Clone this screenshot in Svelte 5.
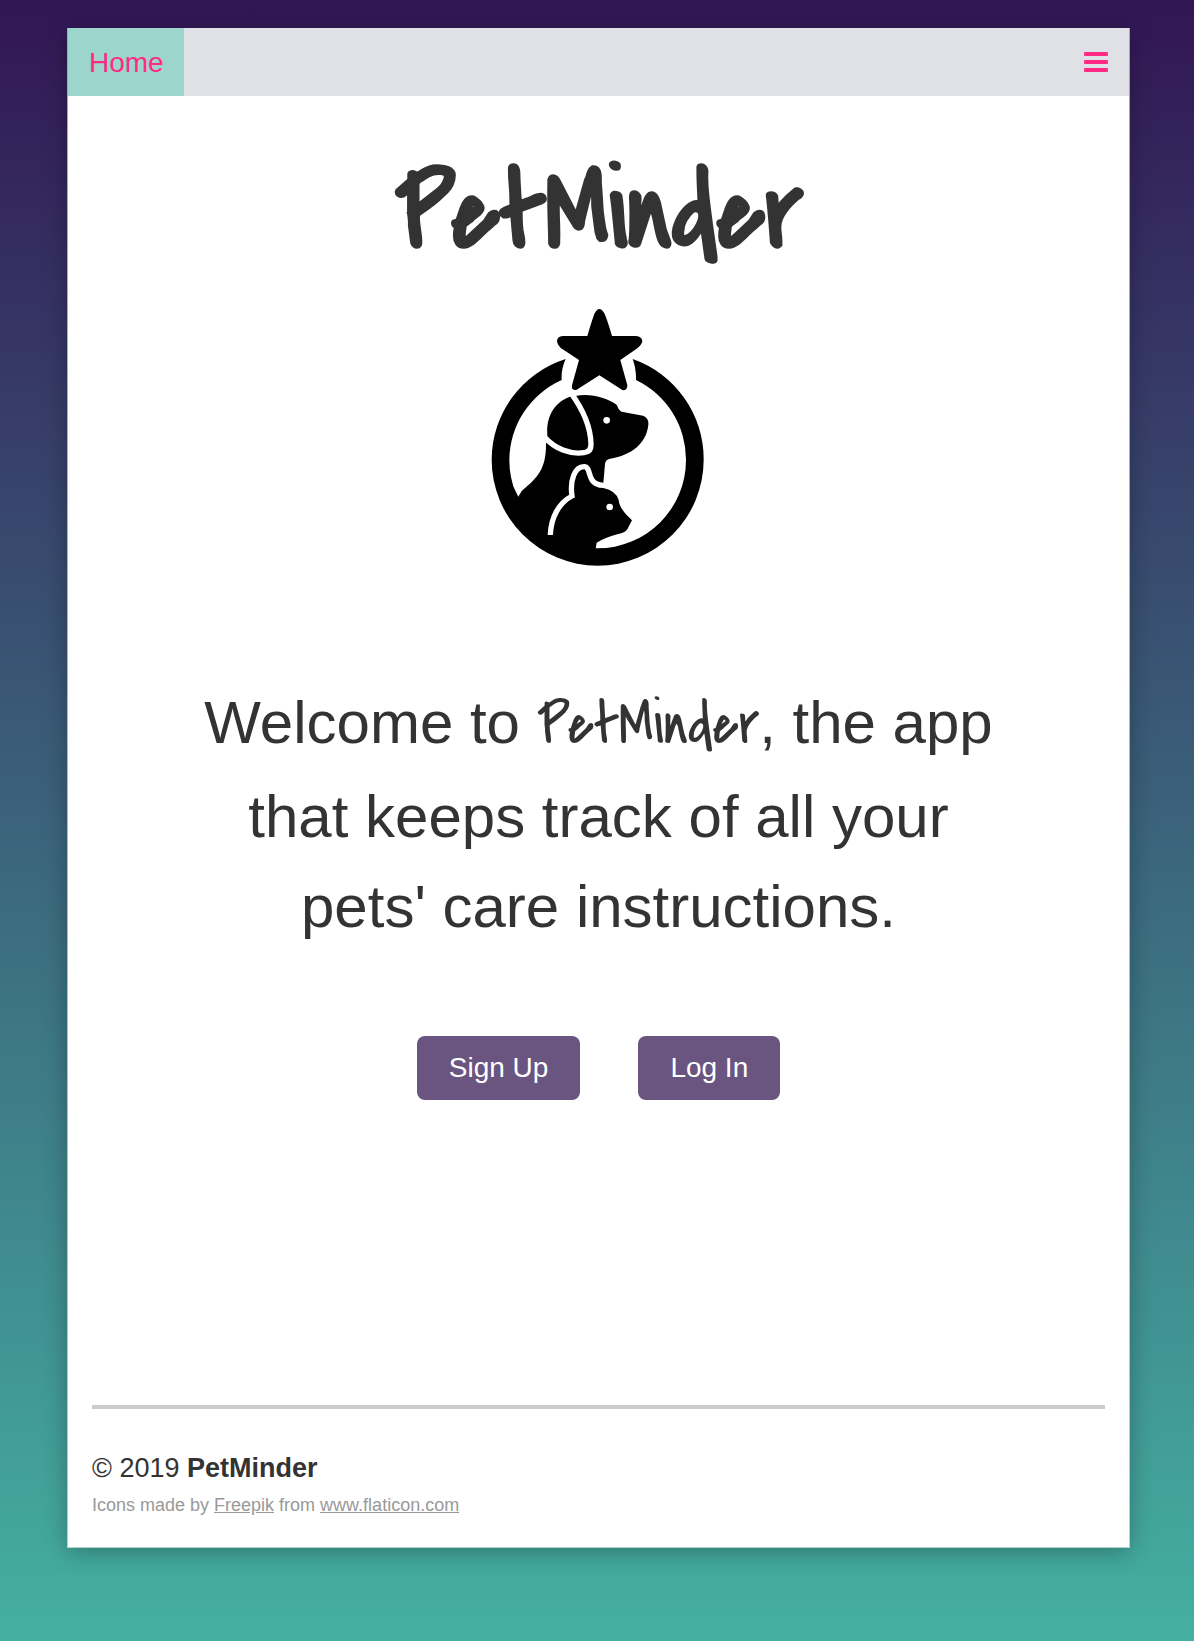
<script>
  const actions = [
    { label: 'Sign Up', href: '#signup' },
    { label: 'Log In', href: '#login' }
  ];
</script>

<div class="page">
  <div class="card">
    <nav class="navbar">
      <a class="home" href="#home">Home</a>
      <button class="menu" type="button" aria-label="Open menu">
        <svg viewBox="0 0 26 20" width="26" height="20" aria-hidden="true">
          <rect x="1" y="0" width="24" height="4" rx="1" />
          <rect x="1" y="8" width="24" height="4" rx="1" />
          <rect x="1" y="16" width="24" height="4" rx="1" />
        </svg>
      </button>
    </nav>

    <main>
      <h1>PetMinder</h1>

      <svg class="logo" viewBox="36 24 642 780" role="img" aria-label="Dog and cat under a star">
        <path d="M458 177A318 318 0 0 1 671 479A318 318 0 0 1 353 797A318 318 0 0 1 35 479A318 318 0 0 1 257 177Q243 207 245 240A265 265 0 0 0 88 480A265 265 0 0 0 353 745A265 265 0 0 0 618 480A265 265 0 0 0 468 240Q469 207 458 177Z" />
        <path d="M287 288C330 279 385 294 411 316Q416 332 425 335L489 347Q507 353 505 375C499 430 455 466 390 476Q376 479 375 492L370 549V564Q408 572 416 600C418 625 440 645 456 661L442 688Q434 699 415 702Q376 712 350 728L347 746L340 780C220 780 120 690 100 560L115 590L125 573C175 532 199 505 198 430L202 408C198 345 225 308 268 291Z" />
        <path class="line" d="M272 278C310 330 332 385 333 432Q334 456 312 458C270 464 225 446 194 412" />
        <path class="line" d="M211 705C213 650 238 608 276 588C269 542 284 498 314 500C328 502 326 524 336 540Q347 557 374 556" />
        <circle class="eye" cx="380" cy="361" r="10" />
        <circle class="eye" cx="389" cy="621" r="10" />
        <path d="M344 40Q358 14 373 40Q380 54 396 108H468Q487 110 487 124Q484 137 470 146L421 180L442 256Q442 273 427 270L358 226L290 269Q273 273 276 256L297 180L248 148Q232 137 231 122Q233 109 248 108H322Q338 54 344 40Z" />
      </svg>

      <p class="welcome">
        Welcome to <span class="brand">PetMinder</span>, the app that keeps track of all your pets' care instructions.
      </p>

      <div class="actions">
        {#each actions as action}
          <a class="button" href={action.href}>{action.label}</a>
        {/each}
      </div>
    </main>

    <footer>
      <p class="copyright">© 2019 <strong>PetMinder</strong></p>
      <p class="credits">
        Icons made by <a href="#freepik">Freepik</a> from <a href="#flaticon">www.flaticon.com</a>
      </p>
    </footer>
  </div>
</div>

<style>
  :global(body) {
    margin: 0;
  }

  .page {
    box-sizing: border-box;
    display: flex;
    min-height: 100vh;
    padding: 28px 64px 93px 67px;
    background: linear-gradient(#321655, #44b0a1);
    color: #333;
    font-family: 'Liberation Sans', Arial, sans-serif;
  }

  .card {
    box-sizing: border-box;
    display: flex;
    flex: 1;
    flex-direction: column;
    min-width: 0;
    border: 1px solid rgba(255, 255, 255, 0.6);
    border-top: 0;
    background: #fff;
    background-clip: padding-box;
    box-shadow: 0 4px 22px rgba(0, 0, 0, 0.28);
  }

  .navbar {
    display: flex;
    justify-content: space-between;
    background: #e0e1e6;
  }

  .home {
    padding: 1px 20px 0 21px;
    background: #9cd5cc;
    color: #ff2a83;
    font-size: 28px;
    line-height: 67px;
    text-decoration: none;
  }

  .menu {
    display: flex;
    align-items: center;
    padding: 0 20px;
    border: 0;
    background: none;
    fill: #ff2a83;
    cursor: pointer;
  }

  main {
    display: flex;
    flex: 1;
    flex-direction: column;
    align-items: center;
    padding: 58px 24px;
  }

  h1,
  .brand {
    font-family: 'Covered By Your Grace', Lato, cursive;
  }

  h1 {
    margin: 0;
    font-size: 110px;
    font-weight: 700;
    line-height: 120px;
  }

  .logo {
    width: 214px;
    height: 260px;
    margin-top: 34px;
    overflow: visible;
  }

  .line {
    fill: none;
    stroke: #fff;
    stroke-width: 16;
  }

  .eye {
    fill: #fff;
  }

  .welcome {
    max-width: 810px;
    margin: 110px 0 0;
    font-size: 60px;
    line-height: 90px;
    text-align: center;
  }

  .brand {
    line-height: 92px;
  }

  .actions {
    display: flex;
    flex-wrap: wrap;
    justify-content: center;
    gap: 58px;
    margin-top: 84px;
  }

  .button {
    padding: 0 32px;
    border-radius: 8px;
    background: #6a5581;
    color: #fff;
    font-size: 28px;
    line-height: 64px;
    text-decoration: none;
  }

  footer {
    margin: 0 24px;
    padding: 39px 0 24px;
    border-top: 4px solid #ccc;
  }

  footer p {
    margin: 0;
  }

  .copyright {
    font-size: 27px;
    line-height: 40px;
  }

  .credits {
    color: #999;
    font-size: 18px;
    line-height: 35px;
  }

  .credits a {
    color: inherit;
  }
</style>
